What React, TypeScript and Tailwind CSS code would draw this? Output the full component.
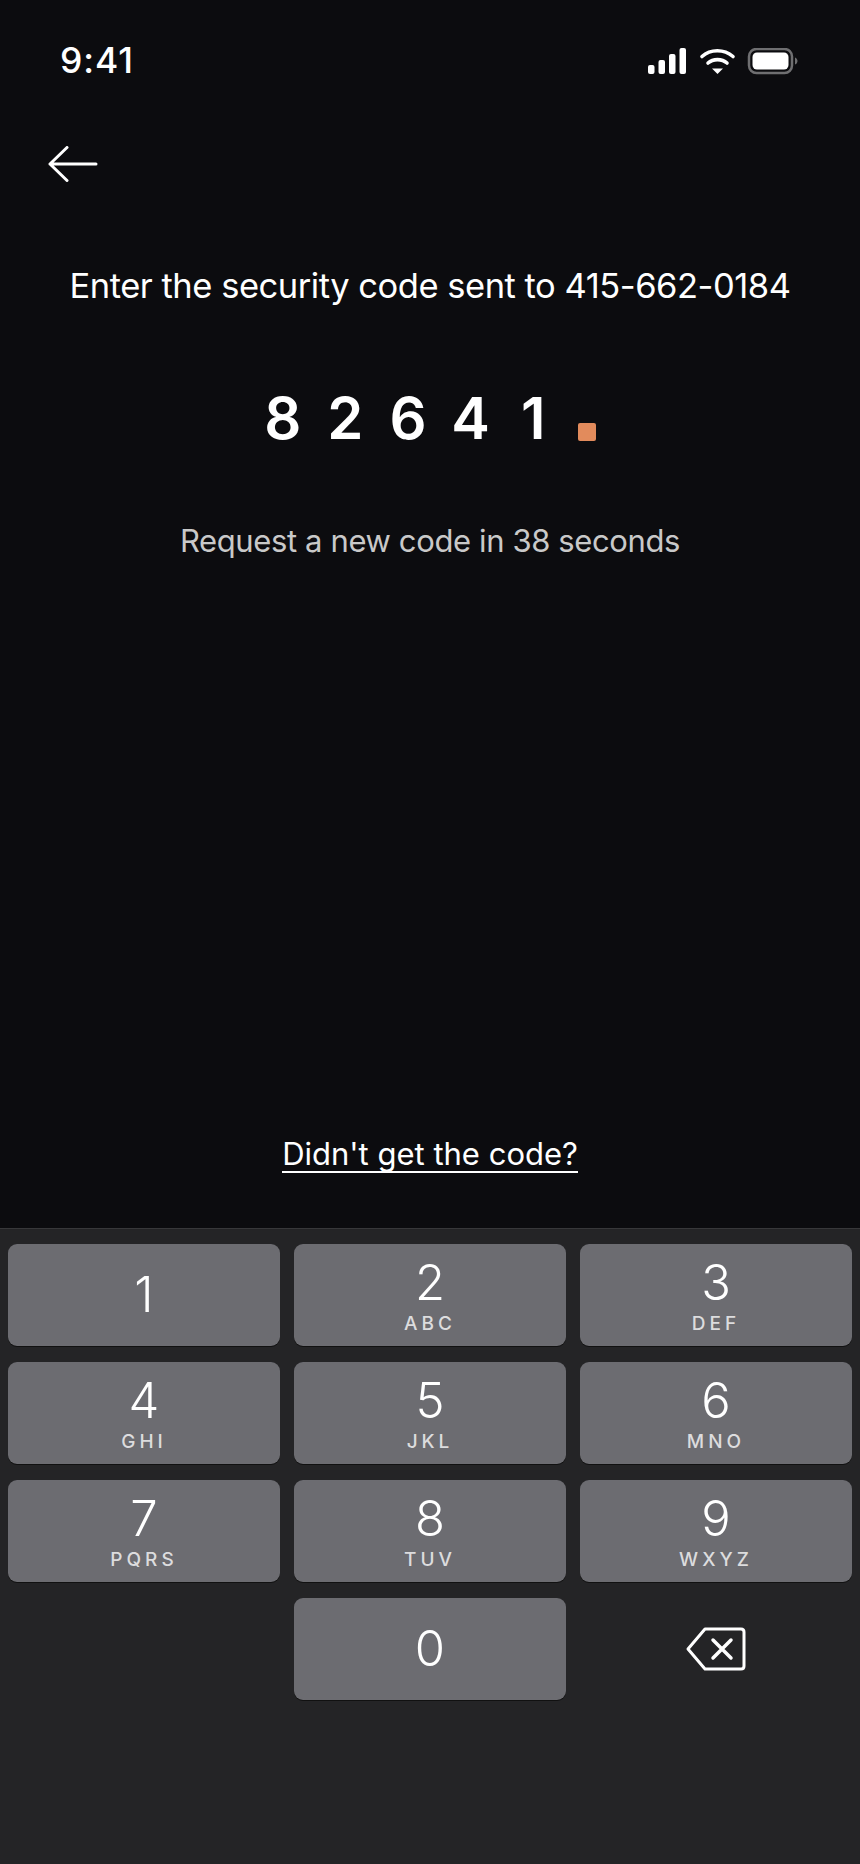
import React from 'react';

const keys = [
  { digit: '1', letters: '' },
  { digit: '2', letters: 'ABC' },
  { digit: '3', letters: 'DEF' },
  { digit: '4', letters: 'GHI' },
  { digit: '5', letters: 'JKL' },
  { digit: '6', letters: 'MNO' },
  { digit: '7', letters: 'PQRS' },
  { digit: '8', letters: 'TUV' },
  { digit: '9', letters: 'WXYZ' },
];

const code = ['8', '2', '6', '4', '1'];

const StatusIcons = () => (
  <svg width="150" height="27" viewBox="0 0 150 27" fill="none">
    <rect x="0" y="17" width="6.5" height="9" rx="2" fill="#fff" />
    <rect x="10.5" y="12" width="6.5" height="14" rx="2" fill="#fff" />
    <rect x="21" y="6" width="6.5" height="20" rx="2" fill="#fff" />
    <rect x="31.5" y="0" width="6.5" height="26" rx="2" fill="#fff" />
    <path d="M54 8.5C62.5 .8 76 .8 85 8.5" stroke="#fff" strokeWidth="3.6" strokeLinecap="round" />
    <path d="M60 15C65 10.5 74 10.5 79 15" stroke="#fff" strokeWidth="3.6" strokeLinecap="round" />
    <path d="M64 20.5H75L69.5 26Z" fill="#fff" />
    <rect x="101" y="1" width="43" height="24" rx="7.5" stroke="#6f6f71" strokeWidth="2.5" />
    <rect x="104.5" y="4.5" width="36" height="17" rx="4.5" fill="#fff" />
    <path d="M147 9.5C148.5 10 149.5 11.5 149.5 13S148.5 16 147 16.5Z" fill="#6f6f71" />
  </svg>
);

const BackArrow = () => (
  <svg width="50" height="36" viewBox="0 0 50 36" fill="none">
    <path d="M19 1.5L2 18L19 34.5M2 18H48" stroke="#fff" strokeWidth="3" strokeLinecap="round" strokeLinejoin="round" />
  </svg>
);

const BackspaceIcon = () => (
  <svg width="60" height="44" viewBox="0 0 60 44" fill="none">
    <path d="M19 2H55C57 2 58 3 58 5V39C58 41 57 42 55 42H19L2 22Z" stroke="#fff" strokeWidth="3" strokeLinejoin="round" />
    <path d="M27 13L45 31M45 13L27 31" stroke="#fff" strokeWidth="3.5" strokeLinecap="round" />
  </svg>
);

const Key = ({ digit, letters }: { digit: string; letters?: string }) => (
  <div className="h-[102px] rounded-[9px] bg-[#6c6c71] flex flex-col items-center justify-center text-white shadow-[0_1px_0_#111]">
    <span className={`text-[49px] leading-[50px] font-light ${letters ? 'mt-[2px]' : ''}`}>{digit}</span>
    {letters && (
      <span className="mt-[6px] text-[19px] leading-[20px] font-medium tracking-[4px] text-[#dcdcde]">{letters}</span>
    )}
  </div>
);

export default function App() {
  return (
    <div className="w-[860px] h-[1864px] bg-[#0c0c0f] flex flex-col font-['Inter',sans-serif] text-white">
      <div className="h-[120px] flex items-start justify-between pt-[45px] pl-[60px] pr-[62px]">
        <span className="text-[35.5px] leading-[32px] font-medium tracking-[0.9px]">9:41</span>
        <div className="mt-[3px]">
          <StatusIcons />
        </div>
      </div>
      <div className="pl-[48px] pt-[26px] h-[78px]">
        <BackArrow />
      </div>
      <div className="mt-[66px] text-center text-[34.5px] leading-[44px] tracking-[-0.47px]">
        Enter the security code sent to 415-662-0184
      </div>
      <div className="mt-[74px] flex justify-center items-end h-[72px]">
        <div className="flex items-end mr-[12px]">
          {code.map((d, i) => (
            <span key={i} className="w-[62.6px] text-center text-[58px] leading-[72px] font-semibold">
              {d}
            </span>
          ))}
          <span className="ml-[14px] mb-[13px] w-[18px] h-[18px] rounded-[2px] bg-[#e28b5c]" />
        </div>
      </div>
      <div className="mt-[65px] text-center text-[31px] leading-[44px] tracking-[-0.38px] text-[#c9c9c9]">
        Request a new code in 38 seconds
      </div>
      <div className="flex-1 flex items-end justify-center pb-[55px]">
        <span className="text-[31px] leading-[34px] border-b-2 border-white">Didn't get the code?</span>
      </div>
      <div className="h-[636px] bg-[#242426] border-t border-[#38383a] pt-[15px] px-[8px]">
        <div className="grid grid-cols-3 gap-x-[14px] gap-y-[16px]">
          {keys.map((k) => (
            <Key key={k.digit} digit={k.digit} letters={k.letters} />
          ))}
          <div />
          <Key digit="0" />
          <div className="flex items-center justify-center">
            <BackspaceIcon />
          </div>
        </div>
      </div>
    </div>
  );
}
